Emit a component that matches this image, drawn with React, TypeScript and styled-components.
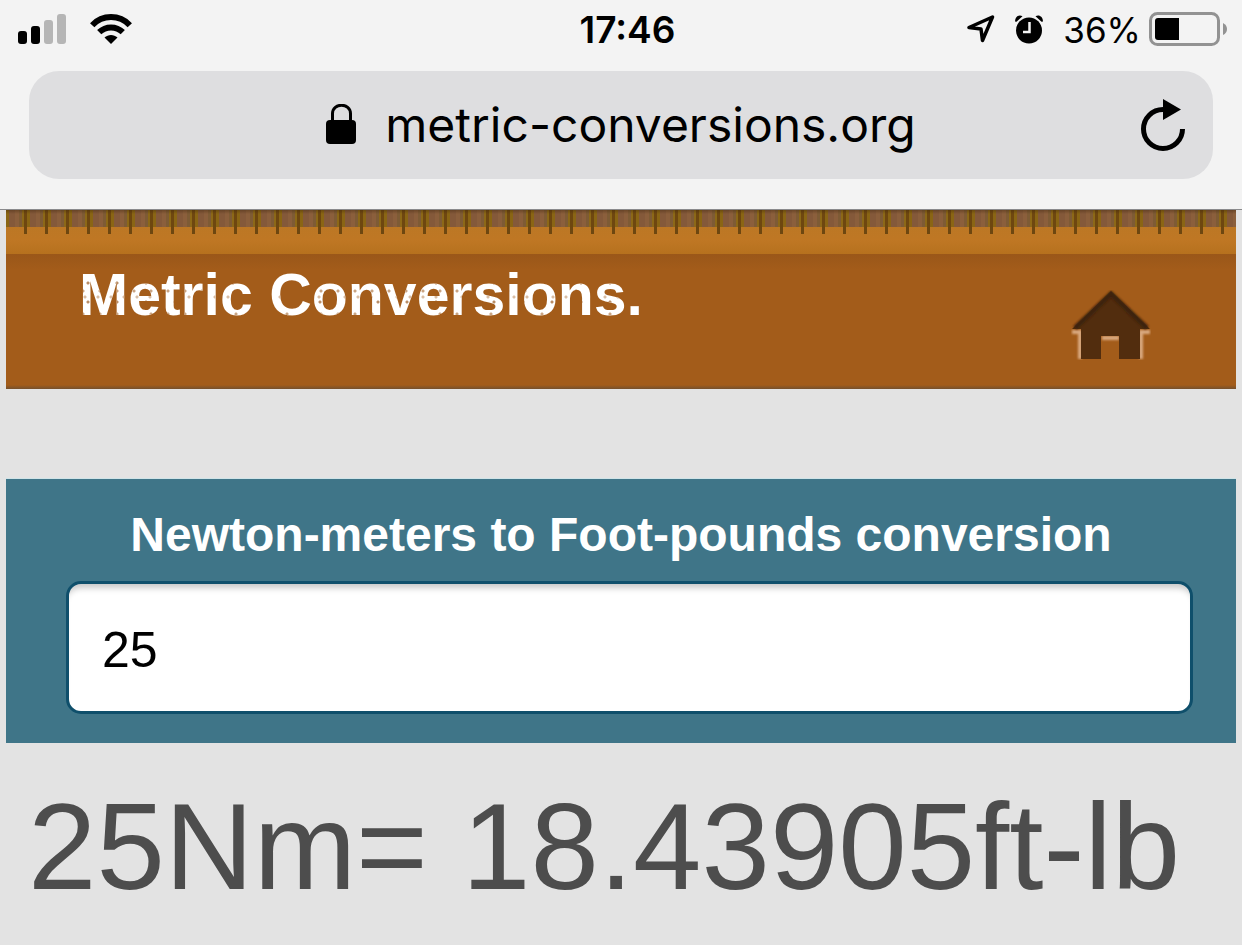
import React, { useState } from "react";
import styled, { createGlobalStyle } from "styled-components";

const GlobalStyle = createGlobalStyle`
  *, *::before, *::after { box-sizing: border-box; }
  body {
    margin: 0;
    background: #e3e3e3;
    color: #000;
    font-family: "Liberation Sans", Arial, sans-serif;
  }
`;

const BrowserChrome = styled.div`
  background: #f3f3f3;
  border-bottom: 1px solid #8a8a8c;
  padding-bottom: 30px;
  font-family: Inter, sans-serif;
`;

const StatusBar = styled.div`
  display: grid;
  grid-template-columns: 1fr auto 1fr;
  align-items: center;
  height: 58px;
  padding: 0 15px 0 18px;
`;

const StatusGroup = styled.div<{ $end?: boolean }>`
  display: flex;
  align-items: center;
  gap: ${(p) => (p.$end ? "20px" : "24px")};
  justify-content: ${(p) => (p.$end ? "flex-end" : "flex-start")};
`;

const Clock = styled.time`
  padding: 2px 0 0 10px;
  font-size: 37px;
  line-height: 40px;
  font-weight: 600;
`;

const BatteryStatus = styled.div`
  display: flex;
  align-items: center;
  gap: 8px;
  font-size: 35px;
  line-height: 40px;
`;

const BatteryLevel = styled.span`
  padding-top: 2px;
`;

const AddressBar = styled.div`
  display: grid;
  grid-template-columns: 1fr auto 1fr;
  align-items: center;
  height: 108px;
  margin: 13px 29px 0;
  padding: 0 27px;
  border-radius: 30px;
  background: #dedee0;
`;

const Address = styled.div`
  grid-column: 2;
  display: flex;
  align-items: center;
  gap: 28px;
  font-size: 48px;
  line-height: 60px;
`;

const ReloadButton = styled.button`
  justify-self: end;
  display: flex;
  padding: 0;
  border: 0;
  background: none;
  color: #000;
`;

const Page = styled.div`
  padding: 0 6px;
`;

const SiteHeader = styled.header`
  height: 179px;
  background: linear-gradient(#9a5719, #a35c1a 16px, #a35c1a 131px, #75502d 135px) 0 44px / 100% 135px no-repeat;
  display: grid;
  grid-template-rows: 44px 1fr;
`;

const Ruler = styled.div`
  background:
    linear-gradient(rgba(60, 35, 10, 0.4), rgba(60, 35, 10, 0) 4px),
    repeating-linear-gradient(90deg, transparent 0 18px, #6e4710 18px 21px) 0 0 / 100% 24px no-repeat,
    repeating-linear-gradient(90deg, #8a6514 0 3px, #84593a 3px 9px, #8b5f3c 9px 13px, #7e5b35 13px 16px, #8c6817 16px 21px) 0 0 / 100% 17px no-repeat,
    linear-gradient(#b87825, #bf7724 30px, #b6711e 44px);
`;

const Masthead = styled.div`
  display: flex;
  justify-content: space-between;
  align-items: flex-start;
  padding: 5px 85px 0 73px;
`;

/* White lettering with a worn, speckled print */
const Brand = styled.a`
  color: transparent;
  background:
    radial-gradient(circle at 4px 9px, #c9a483 1px, transparent 2px) 0 0 / 17px 23px,
    radial-gradient(circle at 9px 5px, #b98d66 1px, transparent 2px) 0 0 / 29px 19px,
    radial-gradient(circle at 6px 7px, #d8bda4 1px, transparent 2px) 0 0 / 13px 31px,
    #fff;
  background-clip: text;
  -webkit-background-clip: text;
  font-size: 59px;
  line-height: 72px;
  font-weight: 700;
  text-decoration: none;
`;

const HomeLink = styled.a`
  display: flex;
  padding-top: 31px;
`;

const Converter = styled.form`
  display: flex;
  flex-direction: column;
  gap: 20px;
  margin-top: 90px;
  padding: 30px 43px 29px 60px;
  background: #3f7588;
  box-shadow: 0 -1px 0 #d0e4e8;
`;

const ConverterTitle = styled.label`
  padding-right: 17px;
  color: #fff;
  font-size: 48px;
  line-height: 52px;
  font-weight: 700;
  text-align: center;
`;

const AmountInput = styled.input`
  width: 100%;
  height: 133px;
  padding: 4px 33px 0;
  border: 3px solid #0f4f6b;
  border-radius: 15px;
  background: #fff;
  box-shadow: inset 0 9px 6px -5px rgba(0, 0, 0, 0.22);
  color: #000;
  font-family: inherit;
  font-size: 50px;
  outline: none;
`;

const Result = styled.output`
  display: block;
  padding: 32px 22px;
  color: #4d4d4d;
  font-size: 123px;
  line-height: 144px;
`;

function SignalIcon() {
  return (
    <svg width="48" height="30" viewBox="0 0 48 30" aria-hidden="true">
      <rect x="0" y="17" width="9" height="13" rx="3" />
      <rect x="13" y="12" width="9" height="18" rx="3" />
      <rect x="26" y="6" width="9" height="24" rx="3" fill="#b5b5b5" />
      <rect x="39" y="0" width="9" height="30" rx="3" fill="#b5b5b5" />
    </svg>
  );
}

function WifiIcon() {
  return (
    <svg width="42" height="30" viewBox="0 0 42 30" aria-hidden="true">
      <g fill="none" stroke="#000" strokeWidth="6">
        <path d="M2.2 11.2C12.5.4 29.5.4 39.8 11.2" />
        <path d="M9.2 18.2C15.8 11.8 26.2 11.8 32.8 18.2" />
      </g>
      <path d="M14.5 23.5C18.2 20 23.8 20 27.5 23.5L21 30Z" />
    </svg>
  );
}

function LocationIcon() {
  return (
    <svg width="28" height="28" viewBox="0 0 28 28" aria-hidden="true">
      <path d="M25.5 2 15.5 25.5 14 14 2 12.5Z" fill="none" stroke="#000" strokeWidth="3.5" strokeLinejoin="round" />
    </svg>
  );
}

function AlarmIcon() {
  return (
    <svg width="28" height="29" viewBox="0 0 28 29" aria-hidden="true">
      <circle cx="14" cy="15.5" r="13" />
      <path d="M0 6.5C0 1.5 4-.8 7.500 1.200L1.500 6.800ZM28 6.500C28 1.500 24-.8 20.500 1.200L26.500 6.800Z" />
      <path d="M14.500 7V17H8" fill="none" stroke="#f3f3f3" strokeWidth="2.500" />
    </svg>
  );
}

function BatteryIcon() {
  return (
    <svg width="78" height="34" viewBox="0 0 78 34" aria-hidden="true">
      <rect x="1.5" y="1.5" width="68" height="31" rx="7" fill="none" stroke="#929292" strokeWidth="3" />
      <path d="M9 6H30V28H9Q6 28 6 25V9Q6 6 9 6Z" />
      <path d="M74 11Q78 13 78 17T74 23Z" fill="#929292" />
    </svg>
  );
}

function LockIcon() {
  return (
    <svg width="31" height="42" viewBox="0 0 31 42" aria-hidden="true">
      <rect x="0" y="16" width="30" height="24" rx="4" />
      <path d="M6.500 18V9.500C6.500-1.500 24.500-1.500 24.500 9.500V18" fill="none" stroke="#000" strokeWidth="3" />
    </svg>
  );
}

function ReloadIcon() {
  return (
    <svg width="46" height="54" viewBox="0 0 46 54" aria-hidden="true">
      <path d="M23 11.500A19.500 19.500 0 1 0 42.500 31" fill="none" stroke="#000" strokeWidth="5" />
      <path d="M23 1V22L41 11.500Z" />
    </svg>
  );
}

function HomeIcon() {
  return (
    <svg width="80" height="70" viewBox="0 0 80 70" aria-hidden="true">
      <defs>
        <filter id="soften" x="-10%" y="-10%" width="120%" height="120%">
          <feGaussianBlur stdDeviation="0.8" />
        </filter>
      </defs>
      <path d="M1 42H9V69M79 42H70V69M31 48H48" fill="none" stroke="#d9a87f" strokeWidth="4" filter="url(#soften)" />
      <path d="M40 1 79 39H69V69H48V46H30V69H10V39H1Z" fill="#522d0e" />
      <path d="M4 38 40 4 76 38" fill="none" stroke="#3e230a" strokeWidth="5" filter="url(#soften)" />
    </svg>
  );
}

export default function App() {
  const [amount, setAmount] = useState("25");
  const converted = Number((Number(amount) * 0.737562).toFixed(5));
  return (
    <>
      <GlobalStyle />
      <BrowserChrome>
        <StatusBar>
          <StatusGroup>
            <SignalIcon />
            <WifiIcon />
          </StatusGroup>
          <Clock>17:46</Clock>
          <StatusGroup $end>
            <LocationIcon />
            <AlarmIcon />
            <BatteryStatus>
              <BatteryLevel>36%</BatteryLevel>
              <BatteryIcon />
            </BatteryStatus>
          </StatusGroup>
        </StatusBar>
        <AddressBar>
          <Address>
            <LockIcon />
            <span>metric-conversions.org</span>
          </Address>
          <ReloadButton type="button" aria-label="Reload">
            <ReloadIcon />
          </ReloadButton>
        </AddressBar>
      </BrowserChrome>
      <Page>
        <SiteHeader>
          <Ruler />
          <Masthead>
            <Brand href="#">Metric Conversions.</Brand>
            <HomeLink href="#" aria-label="Home">
              <HomeIcon />
            </HomeLink>
          </Masthead>
        </SiteHeader>
        <main>
          <Converter>
            <ConverterTitle htmlFor="amount">Newton-meters to Foot-pounds conversion</ConverterTitle>
            <AmountInput
              id="amount"
              inputMode="decimal"
              value={amount}
              onChange={(e) => setAmount(e.target.value)}
            />
          </Converter>
          <Result htmlFor="amount">{`${amount}Nm= ${converted}ft-lb`}</Result>
        </main>
      </Page>
    </>
  );
}
